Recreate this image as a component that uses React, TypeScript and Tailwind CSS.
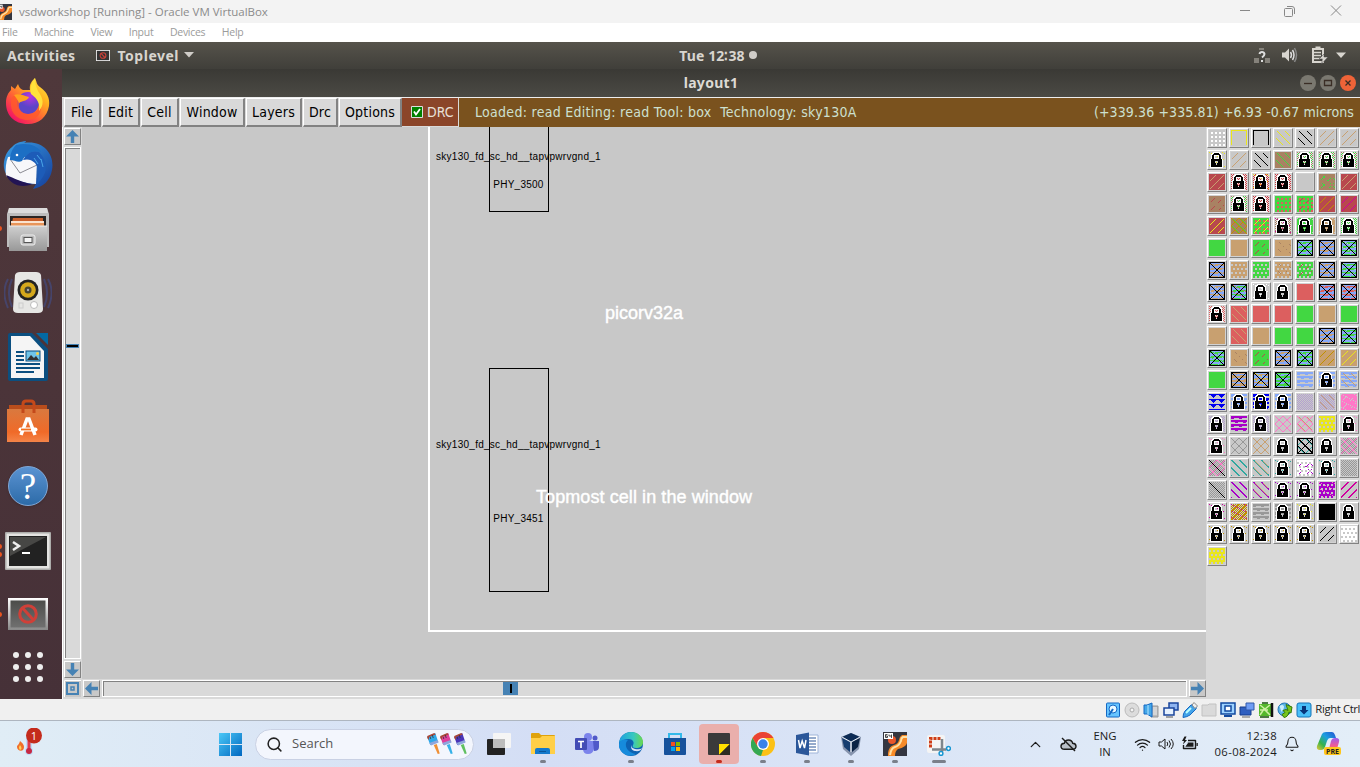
import React from "react";
import { Wifi, Bell, ChevronUp, CloudOff, Search } from "lucide-react";

/* ---------- layer palette ---------- */

const C: Record<string, string> = {
  g: "#42d742", t: "#c8a070", r: "#b8484e", b: "#a98263", l: "#dc5f5f", s: "#c8c8c8",
  u: "#86a8f8", d: "#0000f0", p: "#a800c8", k: "#ff78c8", e: "#30a8a0", v: "#b4a0d0",
  y: "#e9e61c", o: "#c09000", m: "#d000a0", w: "#ffffff", x: "#000000", h: "#989898",
  q: "#d03c44", i: "#e2e2e2",
};

type Test = (x: number, y: number) => boolean;

const PATTERNS: Record<string, Test> = {
  "/": (x, y) => (x + y) % 8 === 7 && x > 0 && y > 0 && x < 15 && y < 15,
  "\\": (x, y) => (x - y + 32) % 8 === 1 && x > 0 && y > 0 && x < 15 && y < 15,
  ">": (x, y) => (x + y) % 8 > 5,
  "<": (x, y) => (x - y + 32) % 8 < 2,
  "1": (x, y) => (x + y) % 8 === 7 && x % 6 > 1 && y % 7 > 1,
  "2": (x, y) => (x - y + 32) % 8 === 2 && x % 6 > 1 && y % 7 > 1,
  "3": (x, y) => x === y,
  "#": (x, y) => (x + y) % 8 === 7 || (x - y + 32) % 8 === 0,
  "%": (x, y) => (x + y) % 2 === 0,
  ",": (x, y) => (x + y) % 2 === 0 && (x + y * 3) % 8 < 3,
  ":": (x, y) => x % 4 > 1 && y % 4 > 1,
  ";": (x, y) => (x + (y % 8 < 4 ? 0 : 2)) % 4 < 2 && y % 4 > 1,
  "=": (x, y) => y % 4 < 2 || ((x + (y % 8 < 4 ? 0 : 4)) % 8 < 3 && y % 4 === 2),
  "-": (x, y) => (y % 4 === 2 && (x + y) % 8 < 7) || (y % 4 === 3 && (x + y) % 8 < 4),
  v: (x, y) => y % 5 === 0 || Math.abs((x % 8) - 4) < 4 - (y % 5),
  ".": (x, y) => (x * 5 + y * 3) % 13 === 0,
  n: (x, y) => y < 1 || ((x === 0 || x === 15) && y < 15),
};

const LOCK = [
  "....wwwwwww.....",
  "...wwxxxxxww....",
  "..wwxxxxxxxww...",
  "..wxxwwwwwxxw...",
  "..wxxw...wxxw...",
  "..wxxw...wxxw...",
  "..wxxwwwwwxxw...",
  ".wxxxxxxxxxxxw..",
  ".wxxxxxxxxxxxw..",
  ".wxxxx...xxxxw..",
  ".wxxxx...xxxxw..",
  ".wxxxxx.xxxxxw..",
  ".wxxxxx.xxxxxw..",
  ".wxxxxxxxxxxxw..",
  ".wxxxxxxxxxxxw..",
  ".wwwwwwwwwwwww..",
];

const pixels = (test: Test) => {
  let d = "";
  for (let y = 0; y < 16; y++) for (let x = 0; x < 16; x++) if (test(x, y)) d += `M${x} ${y}h1v1h-1z`;
  return d;
};

/* Each code is a base colour followed by pattern/colour pairs; L adds the padlock, X the contact cross. */
const LAYERS = `
s:w sny snx s\\y s\\x s/t s/t
s.yL s/t s\\x b\\g i%g,bL i%g,bL i%g,bL
r/t i%qL i%q.yL i%qL s b2g1g r/t
b1r i%g,bL i%qL g:l g:l1r r/o r/m
r/y b#o\\g g:l/y i%b.mL g.sL t.sL i%gL
g t g1r t2b u-gX u-tX u-g.sX
u-tX t;s g;s t;s2b g;s1r u.s-tX u.s-gX
u-t.sX u-g.lX s.wL sL l u-lX u-l.tX
i%lL l\\t l l g t g
t l\\t t g g u-tX u-gX
u.g-gX t2b g1r u-tX u.g-gX t/o t/y
g t-uX u-t.yX g-uX s=u s=uL s=u\\t
svd s=uL s=dL s=uL s%v s%v\\t k.s1s
s%vL s=p s%vL s#k s#k\\t y;s s.kL
s.kL s#h s#t sL s#e\\xX sL s%h#k
s%h#k3x s<e s<e\\t s.eL w1p2p;s s.eL s%h
s%h3x s<p s<p\\t s.pL s.pL p.k;s s>m
s.mL s%o#o.m s=h s=hL s.yL x sL
s.oL s.oL s.oL s.oL s.oL s/x w;s
y;s`.trim().split("\n").map((r) => r.split(" "));

function Swatch({ code }: { code: string }) {
  const lock = code.endsWith("L");
  const cross = code.endsWith("X");
  const body = lock || cross ? code.slice(1, -1) : code.slice(1);
  const pairs = body.match(/../g) ?? [];
  return (
    <div className="size-5 border border-t-white border-l-white border-r-[#828282] border-b-[#828282] bg-[#d2d2d2] p-px">
      <svg width="16" height="16" shapeRendering="crispEdges">
        <rect width="16" height="16" fill={C[code[0]]} />
        {pairs.map((p, i) => <path key={i} d={pixels(PATTERNS[p[0]])} fill={C[p[1]]} />)}
        {cross && <path d={pixels((x, y) => x === 0 || y === 0 || x === 15 || y === 15 || x === y || x + y === 15)} fill="#000" />}
        {lock && <path d={pixels((x, y) => LOCK[y][x] === "w")} fill="#fff" />}
        {lock && <path d={pixels((x, y) => LOCK[y][x] === "x")} fill="#000" />}
      </svg>
    </div>
  );
}

/* ---------- small parts ---------- */

function ArrowButton({ rotate }: { rotate: string }) {
  return (
    <div className="size-[17px] shrink-0 border border-t-white border-l-white border-r-[#828282] border-b-[#828282] bg-[#c8c8c8]">
      <svg width="15" height="15" viewBox="0 0 15 15" className={rotate} fill="#4682b4">
        <path d="M7.5 1 14 7.5H9.2V14H5.8V7.5H1z" />
      </svg>
    </div>
  );
}

function Prohibited({ small = false }: { small?: boolean }) {
  return (
    <svg width={small ? 14 : 40} height={small ? 11 : 32} viewBox="0 0 40 32" preserveAspectRatio="none">
      <defs>
        <linearGradient id="pb" x2="0" y2="1"><stop stopColor="#fff" /><stop offset="1" stopColor="#888" /></linearGradient>
        <linearGradient id="pi" x2="0" y2="1"><stop stopColor="#4c4c4a" /><stop offset="1" stopColor="#707070" /></linearGradient>
      </defs>
      <rect width="40" height="32" fill={small ? "#eee" : "url(#pb)"} />
      <rect x="2.5" y="2.5" width="35" height="27" fill={small ? "#333" : "url(#pi)"} />
      <circle cx="20" cy="16" r="8.3" fill="none" stroke="#cf4038" strokeWidth="3" />
      <path d="m14.5 10 11 12" stroke="#cf4038" strokeWidth="3" />
    </svg>
  );
}

function CellLabelBox({ top, height, phyTop, phy }: { top: string; height: string; phyTop: string; phy: string }) {
  return (
    <div className={`absolute left-[407px] ${top} ${height} w-[60px] border border-black`}>
      <div className={`absolute ${phyTop} left-0 w-[57px] text-center text-[10px] leading-3 tracking-[0.25px] text-black`}>{phy}</div>
    </div>
  );
}

/* ---------- dock icons ---------- */

const Firefox = () => (
  <svg width="48" height="48" viewBox="0 0 48 48">
    <defs>
      <linearGradient id="f1" x1="1" y1="0" x2="0.2" y2="1"><stop stopColor="#fff44f" /><stop offset=".35" stopColor="#ffb41f" /><stop offset=".65" stopColor="#ff6036" /><stop offset="1" stopColor="#f00a6c" /></linearGradient>
      <radialGradient id="f2" cx=".6" cy=".2"><stop stopColor="#b833e1" /><stop offset="1" stopColor="#5b45c8" /></radialGradient>
    </defs>
    <path d="M31 1c2 4 1 6 5 9 7 5 10 11 9 19-2 11-10 18-21 18C10 47 2 38 2 26c0-6 2-10 5-13V9l4 3 3-5c1 3 2 5 5 6h7c-1-6 2-9 5-12z" fill="url(#f1)" />
    <circle cx="24" cy="26" r="11" fill="url(#f2)" />
    <path d="M8 20c7-5 13 0 15 0-1 5-7 3-8 7-1 5 3 10 9 10 7 0 12-5 11-12 5 7 0 18-11 18C12 43 4 34 8 20z" fill="#ff5a2b" opacity=".8" />
    <path d="M10 18c5-2 10 1 15 2-1 4-8 4-10 6-1-3-3-5-5-8z" fill="#ffa21e" />
    <path d="M34 14c6 8 6 14 1 20 1-7-1-12-8-17-2-6 1-12 4-16 0 6 1 8 3 13z" fill="#ffe23c" />
  </svg>
);
const Thunderbird = () => (
  <svg width="50" height="50" viewBox="0 0 50 50">
    <defs><linearGradient id="tb" x2="1" y2="1"><stop stopColor="#3ba0e6" /><stop offset="1" stopColor="#143d9a" /></linearGradient></defs>
    <path d="M9 7C14 2 17 2 23 1c0 1-2 2-2 2 20-3 31 12 28 27-2 11-9 17-19 19l3-5C12 46-1 37 1 22 2 16 4 11 9 7z" fill="url(#tb)" />
    <path d="M5 17c9-2 18-1 29 4l-1 23c-10 0-20-4-30-8C2 29 3 22 5 17z" fill="#f7f7fa" />
    <path d="m7 19 10 14 17-8" fill="none" stroke="#8b8b93" />
    <path d="M3 35c8 3 17 8 26 9-11 5-22 0-26-9z" fill="#221454" />
    <path d="M13 5c12-3 22 1 25 7-7-2-14 0-19 9-4 2-8-1-12-1 0-4 1-10 6-15z" fill="#1c6fc4" />
    <path d="M36 12c10 11 9 22-2 32 2-8 3-14-2-21-4-4-8-4-12-3 4-7 9-10 16-8z" fill="#1d5cb8" />
    <path d="m34 15 4 5M31 18l4 6M38 19l2 8" stroke="#4aa6e8" />
    <circle cx="14" cy="15" r="1.3" fill="#fff" />
  </svg>
);
const Files = () => (
  <svg width="44" height="46" viewBox="0 0 44 46">
    <defs><linearGradient id="fg" x2="0" y2="1"><stop stopColor="#cfcfcf" /><stop offset="1" stopColor="#989898" /></linearGradient></defs>
    <path d="M3 2h38l2 6v33H1V8z" fill="#bdbdbd" /><path d="M3 2h38l1 5H2z" fill="#dcdcdc" />
    <path d="M4 10h36v11H4z" fill="#2b2523" /><path d="M7 12h30v9H5z" fill="#c9602c" /><path d="M5 15h33v2H5z" fill="#fbe3cf" /><path d="M5 17h33v3H5z" fill="#e8955a" />
    <path d="M3 20h38v25H3z" fill="url(#fg)" /><path d="M3 20h38" stroke="#eee" />
    <rect x="15" y="29" width="14" height="10" rx="2" fill="#bbb" stroke="#eee" /><rect x="18" y="31.500" width="8" height="5" fill="#f5f5f5" stroke="#555" />
  </svg>
);
const Speaker = () => (
  <svg width="48" height="44" viewBox="0 0 48 44">
    <path d="M4 8c-5 9-4 20 0 29M8 8c-4 9-4 19 0 28M44 8c5 9 4 20 0 29M40 8c4 9 4 19 0 28" fill="none" stroke="#46446a" strokeWidth="2" />
    <path d="M11 4q1-3 5-3h16q4 0 5 3l2 34q0 4-5 4H14q-5 0-5-4z" fill="#e6e6e4" />
    <circle cx="24" cy="19" r="10.500" fill="#222" /><circle cx="24" cy="19" r="7.800" fill="#d4a81c" /><circle cx="24" cy="19" r="3.500" fill="#443" /><circle cx="24" cy="19" r="1.200" fill="#aaa" />
    <circle cx="30" cy="34" r="3.500" fill="#fff" stroke="#bbb" /><rect x="15" y="32" width="4" height="5" fill="none" stroke="#ccc" />
  </svg>
);
const Writer = () => (
  <svg width="40" height="48" viewBox="0 0 40 48">
    <path d="M2 0h22l16 16v30q0 2-2 2H2q-2 0-2-2V2q0-2 2-2z" fill="#0b4f80" /><path d="M3 3h19l14 15v27H3z" fill="#f5f5f5" />
    <path d="M28 0h12v12z" fill="#0369a3" />
    <path d="M8 19h8M8 23h8M8 27h8M8 31h24M8 35h24M8 39h18" stroke="#0b4f80" strokeWidth="2" />
    <rect x="18" y="18" width="14" height="10" fill="#6fc4e8" stroke="#0b4f80" /><path d="m19 27 4-5 3 3 2-2 3 4z" fill="#333" /><circle cx="29.500" cy="20.500" r="1.500" fill="#f6d34a" />
  </svg>
);
const Software = () => (
  <svg width="42" height="44" viewBox="0 0 42 44">
    <defs><linearGradient id="sw" x2="0" y2="1"><stop stopColor="#d9793f" /><stop offset=".7" stopColor="#f06a28" /><stop offset="1" stopColor="#f48448" /></linearGradient></defs>
    <path d="M2 6h38v5H2z" fill="#b94d1c" /><path d="M0 10h42v33H0z" fill="url(#sw)" />
    <path d="M16 14V5q0-3 3-3h5q3 0 3 3v9" fill="none" stroke="#c4491a" strokeWidth="3" />
    <path d="m14 36 6-16h2l6 16" fill="none" stroke="#fff" strokeWidth="3.500" /><path d="M13.500 30.500h15" stroke="#fff" strokeWidth="4" strokeLinecap="round" /><path d="M14 30.500h10" stroke="#f37020" strokeWidth="1.800" />
  </svg>
);
const Help = () => (
  <div className="flex size-10 items-center justify-center rounded-full border border-[#7fa8d8] bg-linear-to-b from-[#5a93d2] to-[#2c6ba8] pt-px font-['Liberation_Serif',serif] text-[37px] leading-none text-white shadow">?</div>
);
const Terminal = () => (
  <svg width="46" height="38" viewBox="0 0 46 38">
    <rect width="46" height="38" rx="1" fill="#adadab" /><rect x="1.500" y="1.500" width="43" height="35" fill="#e4e4e2" /><rect x="4" y="4" width="38" height="30" fill="#222" /><path d="M5 5h36L5 24z" fill="#474745" />
    <path d="m8 10 6 4-6 4" fill="none" stroke="#eee" strokeWidth="2.500" /><path d="M17 21h8" stroke="#fff" strokeWidth="2" />
  </svg>
);

const DOCK: { icon: React.ReactNode; box: string; dots: number }[] = [
  { icon: <Firefox />, box: "h-[63px]", dots: 0 },
  { icon: <Thunderbird />, box: "h-[65px] pt-px", dots: 0 },
  { icon: <Files />, box: "h-[64px] pb-px", dots: 1 },
  { icon: <Speaker />, box: "h-[64px]", dots: 0 },
  { icon: <Writer />, box: "h-[64px]", dots: 0 },
  { icon: <Software />, box: "h-[65px] pb-px", dots: 0 },
  { icon: <Help />, box: "h-[64px]", dots: 0 },
  { icon: <Terminal />, box: "h-[66px] pb-px", dots: 2 },
  { icon: <Prohibited />, box: "h-[60px]", dots: 1 },
];

/* ---------- taskbar icons ---------- */

const S = ({ children }: { children: React.ReactNode }) => <svg width="24" height="24" viewBox="0 0 24 24">{children}</svg>;

const APPS: { icon: React.ReactNode; dot: string; bg?: string }[] = [
  { dot: "", icon: <S><rect y="7" width="18" height="16" rx="1" fill="#222" /><rect x="6" y="1" width="18" height="15" rx="1" fill="#f5f5f5" /><path d="M6 7h12v9H6z" fill="#bcbcbc" /></S> },
  { dot: "w-1.5 bg-[#7a7f8a]", icon: <S><path d="M0 2q0-1 1-1h7l2 2h13q1 0 1 1v18H0z" fill="#dfa20c" /><path d="M0 6h9l2-2h13v18H0z" fill="#ffcf48" /><path d="M4 22v-4q0-2 2-2h11q2 0 2 2v4z" fill="#1479cc" /><path d="M8 19h7v1H8z" fill="#0a559a" /></S> },
  { dot: "", icon: <S><circle cx="13" cy="5" r="4" fill="#7b83eb" /><circle cx="20" cy="6" r="2.500" fill="#5059c9" /><path d="M8 9h11v8q-1 5-6 5t-5-5z" fill="#7b83eb" /><path d="M18 9h6v6q0 4-5 4z" fill="#5059c9" /><rect y="6" width="12" height="12" rx="1" fill="#434cb5" /><path d="M3 9.500h6M6 9.500V16" stroke="#fff" strokeWidth="1.700" /></S> },
  { dot: "w-1.5 bg-[#7a7f8a]", icon: <S><defs><linearGradient id="eg" x2="1"><stop stopColor="#1d9fe0" /><stop offset=".6" stopColor="#38c8c0" /><stop offset="1" stopColor="#6bd84c" /></linearGradient></defs><circle cx="12" cy="12" r="12" fill="#0d62b2" /><path d="M0 11C1 4 6 0 12 0c7 0 12 5 12 10 0 4-3 6-7 6-3 0-4-1-3-3 2-3-1-6-4-6-5 0-8 2-10 4z" fill="url(#eg)" /><path d="M9 8c-4 3-3 12 8 14-7 4-15 0-17-7-1-6 4-9 9-7z" fill="#168bdc" /><path d="M13 13c-1 2 0 3 3 4q5 1 7-1c-1 3-4 3.500-7 3s-5-3-3-6z" fill="#d8e2f7" /></S> },
  { dot: "", icon: <S><path d="M1 6h22v16q0 1-1 1H2q-1 0-1-1z" fill="#17529c" /><path d="M6 6V2h12v4" fill="none" stroke="#33b9ea" strokeWidth="2" /><path d="M8 10h4v4H8z" fill="#f25022" /><path d="M13 10h4v4h-4z" fill="#7fba00" /><path d="M8 15h4v4H8z" fill="#00a4ef" /><path d="M13 15h4v4h-4z" fill="#ffb900" /></S> },
  { dot: "w-1.5 bg-[#c42b1c]", bg: "bg-[#eaafac]", icon: <S><rect x="1" y="1" width="22" height="22" rx="1" fill="#3a3a3a" /><path d="M12 12h11L12 23z" fill="#ffe000" /><path d="M23 12v11H12z" fill="#2c2a20" /></S> },
  { dot: "w-1.5 bg-[#7a7f8a]", icon: <S><circle cx="12" cy="12" r="12" fill="#fbc116" /><path d="M1.600 6A12 12 0 0 1 22.400 6H12z" fill="#ea4335" /><path d="m7 15 5 3-2 6A12 12 0 0 1 1.600 6z" fill="#34a853" /><path d="M1.600 6H12v6l-5 3z" fill="#ea4335" /><circle cx="12" cy="12" r="6" fill="#fff" /><circle cx="12" cy="12" r="4.700" fill="#3b82ea" /></S> },
  { dot: "w-1.5 bg-[#7a7f8a]", icon: <S><path d="M12 3h11v18H12z" fill="#fff" stroke="#9fb4d8" /><path d="M14 6h7M14 9h7M14 12h7M14 15h7M14 18h7" stroke="#2b579a" strokeWidth="1.200" /><path d="m1 3 13-2.500v23L1 21z" fill="#2b579a" /><path d="m3.500 8 1.500 8 2.200-7 2.300 7L11 8" fill="none" stroke="#fff" strokeWidth="1.500" /></S> },
  { dot: "w-1.5 bg-[#7a7f8a]", icon: <S><path d="m12 1 10 4-2 12-8 7-8-7L2 5z" fill="#8794ad" /><path d="m12 1 9 4-9 5-9-5z" fill="#0c2b55" /><path d="m3 6 8 4v10l-6-5z" fill="#173e70" /><path d="m21 6-8 4v10l6-5z" fill="#0b2344" /><path d="m3 5 9 5 9-5M12 10v10" fill="none" stroke="#e8eef5" /></S> },
  { dot: "w-1.5 bg-[#7a7f8a]", icon: <MagicIcon /> },
  { dot: "w-[14px] bg-[#7a7f8a]", icon: <S><rect y="3" width="18" height="18" rx="2" fill="#f4f4f4" /><path d="M3.500 15.500V6.500h10.500" fill="none" stroke="#cf3d16" strokeWidth="3" strokeDasharray="3 1" /><path d="M15 7v13M5 17.500h14" stroke="#7e868c" strokeWidth="2.500" /><circle cx="14" cy="21.500" r="1.900" fill="#fff" stroke="#1696d2" strokeWidth="1.500" /><circle cx="21.500" cy="16.500" r="1.900" fill="#fff" stroke="#1696d2" strokeWidth="1.500" /></S> },
];

function MagicIcon() {
  return (
    <S>
      <rect width="24" height="24" fill="#343640" />
      <path d="M24 3h-5q-3 2-3 5-1 4-5 5-5 1-6 8v3h7q0-5 3-7 8-2 9-6z" fill="#f68a28" /><path d="M24 5h-4q-2 1-2 4-2 5-6 6-4 1-5 8" fill="none" stroke="#ffe0a4" strokeWidth="2" />
      <circle cx="9" cy="8" r="4" fill="#e8572c" />
      <path d="M1 1h9v6H1z" fill="#fff" /><path d="M4.500 2.500H2.500v3h2v-1.500h-2M6 2.500V4h2.500M8.500 2.500v3.500" fill="none" stroke="#222" strokeWidth=".8" />
    </S>
  );
}

const Brush = ({ c, h }: { c: string; h: string }) => (
  <svg width="13.500" height="22" viewBox="0 0 13 22"><path d="M0 4 8 0l3 9-8 3z" fill={c} /><path d="M0 5V3l7-3 1.500 1.500L2 4 1.500 7z" fill="#a84838" /><path d="m5 2 1 3M3 4l.5 2" stroke="#333" strokeWidth=".8" /><path d="m2 10 8.500-3 .8 2.500-7.500 3z" fill="#8fa6dc" /><path d="m6.500 12 3-1 3 9.500-2 .5z" fill={h} /></svg>
);

const T = ({ children }: { children: React.ReactNode }) => <svg width="16" height="16" viewBox="0 0 16 16">{children}</svg>;
const STATUS = [
  <T><rect x="1.500" y="1" width="13" height="14" rx="1" fill="#66c4ff" stroke="#1468c4" /><circle cx="8" cy="7" r="4" fill="#e9f8ff" stroke="#1468c4" /><path d="m8 7-4 6" stroke="#1468c4" strokeWidth="2" /></T>,
  <T><circle cx="8" cy="8" r="7" fill="#dcdcdc" stroke="#bbb" /><circle cx="8" cy="8" r="2" fill="#f5f5f5" stroke="#aaa" /></T>,
  <T><path d="M9 4h6v11H8z" fill="#bbb" stroke="#999" /><path d="M10 6h4M10 8h4M10 10h4M10 12h4" stroke="#eee" /><path d="M1 3h3l5-2v14l-5-3H1z" fill="#45a8e8" stroke="#1468c4" /><path d="M5 3v10" stroke="#b7e6ff" /></T>,
  <T><path d="M6 1h9v7H6z" fill="#8fb4f0" stroke="#1b469c" strokeWidth="1.500" /><path d="M1 6h10v7H1z" fill="#e8f3ff" stroke="#1b469c" strokeWidth="1.500" /><path d="M3 15h7" stroke="#555" /></T>,
  <T><path d="M9 3q2-1 4 1t1 3l-6 6q-3 2-7 2.500 0-4 2-6.500z" fill="#43a3e8" stroke="#1468c4" /><path d="m10 3 2-2.500L15.500 4l-2.500 2.500z" fill="#eee" stroke="#888" /><path d="m4 11 5-5" stroke="#bff" strokeWidth="2" /></T>,
  <T><path d="M1 14V3h6l1-1h7v12z" fill="#dadada" stroke="#c2c2c2" /></T>,
  <T><path d="M1 1h14v11H1z" fill="#9ed3ff" stroke="#124aa0" strokeWidth="1.500" /><path d="M5 4h6v5H5z" fill="#fff" stroke="#124aa0" strokeWidth="1.500" /><path d="M4 14h8" stroke="#124aa0" strokeWidth="2" /></T>,
  <T><path d="M1 5h11v8H1z" fill="#2f5fc0" stroke="#173d8c" /><path d="M7 1h8v7H7z" fill="#6e9cf4" stroke="#3158a8" /><path d="M3 15h8" stroke="#666" /></T>,
  <T><path d="M1 2h13v12H1z" fill="#54b82b" /><path d="m2 3 5 4 5-4M2 13l4-6 6 6M2 8h8" fill="none" stroke="#cef0a4" strokeWidth="1.500" /><path d="M4 1h6M2 15h9" stroke="#18520c" strokeWidth="1.500" /><path d="M14 1v14" stroke="#111" strokeWidth="2.500" /></T>,
  <T><circle cx="7.500" cy="7.500" r="6.500" fill="#5bb5e7" stroke="#2276b3" /><path d="M2.500 4c5-3 6 2 2 6z" fill="#c8eefb" /><path d="M9 2.500 15 5l-1 6-2-1q-1 5-5 5.500l-2-3 3-2-2-2 3-1 2 1z" fill="#78c41c" stroke="#35790b" /></T>,
  <T><rect x="1" y="1" width="14" height="14" rx="2" fill="#4abff8" stroke="#1675b8" /><path d="M8 12.500 3.500 8H6V4h4v4h2.500z" fill="#083579" /></T>,
];

const MENUS: [string, string][] = [["File", "w-[37px]"], ["Edit", "w-[38px]"], ["Cell", "w-[38px]"], ["Window", "w-[65px]"], ["Layers", "w-[56px]"], ["Drc", "w-[35px]"], ["Options", "w-[63px]"]];

export default function App() {
  return (
    <div className="flex h-[767px] w-[1360px] flex-col overflow-hidden bg-white font-['Noto_Sans','Open_Sans',sans-serif]">
      {/* host window title */}
      <header className="flex h-[23px] shrink-0 items-center bg-[#f3f3f3] text-[#8b8b8b]">
        <div className="h-4 w-[13px] overflow-hidden"><div className="-ml-1 size-4 [&>svg]:size-4"><MagicIcon /></div></div>
        <span className="ml-1.5 font-['Open_Sans'] text-[11.500px] tracking-[-0.01px]">vsdworkshop [Running] - Oracle VM VirtualBox</span>
        <svg className="mr-4 ml-auto" width="110" height="14" viewBox="0 0 110 14" fill="none" stroke="#888">
          <path d="M6 5.500h10M51.500 3.500h6q1 0 1 1v6q0 1-1 1h-6q-1 0-1-1v-6q0-1 1-1zM53 1.500h5q2.500 0 2.500 2.500v5M97 .5l10 10M107 .5l-10 10" />
        </svg>
      </header>
      <nav className="flex h-[19px] shrink-0 items-center gap-[16.500px] bg-white pt-px pl-[2px] font-['Open_Sans'] text-[10.500px] tracking-[-0.27px] text-[#9b9b9b]">
        {["File", "Machine", "View", "Input", "Devices", "Help"].map((m) => <span key={m}>{m}</span>)}
      </nav>

      {/* guest top bar */}
      <div className="grid h-[27px] shrink-0 grid-cols-[1fr_auto_1fr] items-center bg-linear-to-b from-[#56534b] to-[#403f3a] pb-px text-[14px] font-bold text-[#d8d5cf]">
        <div className="flex items-center pl-[7px]">
          <span className="tracking-[0.35px]">Activities</span>
          <div className="mr-[8px] ml-[20px]"><Prohibited small /></div>
          <span className="tracking-[0.5px]">Toplevel</span>
          <svg className="ml-[5px]" width="10" height="6" fill="#d0cdc8"><path d="M0 0h10L5 5.500z" /></svg>
        </div>
        <div className="flex items-center gap-1 pl-[76px]"><span className="tracking-[0.1px]">Tue 12∶38</span><i className="size-2 rounded-full bg-[#d0cdc8]" /></div>
        <svg className="mr-3.5 ml-auto" width="94" height="20" viewBox="0 0 94 20" fill="#d8d5cf">
          <path d="M2 13h5v5H2zM13 13h5v5h-5zM7 3h5v2H7z" fill="#85827b" /><path d="M7.500 9q.5-2 2.500-2t2.500 2q0 1.500-2.500 3.500M10 15v2" fill="none" stroke="#ddd" strokeWidth="2" />
          <path d="M30 7.500h3l4-4v13l-4-4h-3z" /><path d="M38.500 7q2 3 0 6M40.500 5q3 5 0 10" fill="none" stroke="#ddd" strokeWidth="1.500" /><path d="M42.500 3q4 7 0 14" fill="none" stroke="#888" strokeWidth="1.500" />
          <path d="M61 4h10v13H61zM63.500 2.500h5" fill="none" stroke="#d8d5cf" strokeWidth="2" /><path d="M62 7.500h7M62 10.500h7M62 13.500h6" stroke="#d8d5cf" strokeWidth="1.500" /><path d="m72 9-5 5h3.500l-1 5 6.500-7h-4z" stroke="#444" strokeWidth=".5" />
          <path d="M84 7.500h10l-5 5.500z" />
        </svg>
      </div>

      <div className="flex h-[630px] shrink-0">
        {/* dock */}
        <aside className="flex w-[62px] shrink-0 flex-col bg-linear-to-b from-[#4f383b] via-[#4b3439] to-[#463138]">
          {DOCK.map((d, i) => (
            <div key={i} className={`relative flex ${d.box} w-14 items-center justify-center`}>
              {d.dots > 0 && <div className="absolute -left-[3px] flex flex-col gap-[3px]">{Array.from({ length: d.dots }, (_, k) => <i key={k} className="size-[5px] rounded-full bg-[#e95420]" />)}</div>}
              {d.icon}
            </div>
          ))}
          <div className="mt-[8px] ml-[12px] grid w-8 grid-cols-3 gap-x-[5px] gap-y-[6px]">
            {Array.from({ length: 9 }, (_, i) => <i key={i} className="size-[6px] justify-self-center rounded-full bg-[#eee]" />)}
          </div>
        </aside>

        <main className="flex w-[1298px] flex-col bg-[#d9d9d9]">
          <div className="relative flex h-7 shrink-0 items-center justify-center bg-linear-to-b from-[#3a3935] to-[#4b4a44] pb-[2px] text-[14px] font-bold text-[#dddad4]">
            <span className="tracking-[0.3px]">layout1</span>
            <div className="absolute top-1.5 right-1 flex gap-1">
              {["M4 8.500h8", "M4.500 5.500h7v5h-7z", "m5.500 5.500 5 5m0-5-5 5"].map((d, i) => (
                <svg key={i} width="16" height="16"><circle cx="8" cy="8" r="8" fill={i === 2 ? "#ee6338" : "#7a7870"} /><path d={d} fill="none" stroke="#3a2d25" strokeWidth="1.300" /></svg>
              ))}
            </div>
          </div>

          {/* menu and status line */}
          <div className="flex h-[30px] shrink-0 border-t border-[#eeeeee] font-['DejaVu_Sans_Condensed','DejaVu_Sans',sans-serif] text-[14px] text-black [font-stretch:condensed]">
            <div className="flex gap-px pl-[2px] tracking-[0.2px]">
              {MENUS.map(([m, w]) => (
                <div key={m} className={`${w} flex items-center justify-center border border-t-white border-l-white border-r-2 border-b-2 border-r-[#828282] border-b-[#828282] bg-[#d9d9d9] pt-px`}>{m}</div>
              ))}
            </div>
            <div className="flex w-[57px] shrink-0 items-center border-r border-b border-[#d9d9d9] bg-[#8b4529] pl-[9px] text-[#e8e0d8]">
              <svg className="mr-1 shrink-0" width="12" height="12"><path d="M.5.5h11v11H.5z" fill="#008000" stroke="#ddd" /><path d="m3 5.500 2 3L9 3" fill="none" stroke="#fff" strokeWidth="1.800" /></svg>
              DRC
            </div>
            <div className="flex grow items-center justify-between bg-[#7a521e] pr-[6px] pl-4 whitespace-pre text-[#cde0d0]">
              <span className="tracking-[0.29px]">Loaded: read Editing: read Tool: box  Technology: sky130A</span>
              <span className="tracking-[0.11px]">(+339.36 +335.81) +6.93 -0.67 microns</span>
            </div>
          </div>

          <div className="flex h-[572px]">
            {/* vertical scroll column */}
            <div className="flex w-5 shrink-0 flex-col items-center gap-[2px] border-l border-white pt-px">
              <ArrowButton rotate="" />
              <div className="flex h-[512px] w-[17px] flex-col border border-white bg-[#d9d9d9]">
                <div className="grow border-t border-l border-[#828282] pt-[195px]">
                  <div className="h-1 w-[13px] border border-[#4682b4] bg-black" />
                </div>
              </div>
              <ArrowButton rotate="rotate-180" />
              <svg width="17" height="17" fill="none"><path d="M0 0h17v17H0z" fill="#c8c8c8" /><path d="M.5 17V.5H17" stroke="#fff" /><path d="M3 3h11v11H3z" stroke="#4682b4" strokeWidth="2" /><path d="M7 7h3v3H7z" stroke="#4682b4" strokeWidth="1.500" /></svg>
            </div>

            <div className="flex w-[1124px] shrink-0 flex-col">
              {/* layout canvas: positions are drawing coordinates */}
              <div className="relative h-[552px] shrink-0 overflow-hidden bg-[#c8c8c8] font-['Liberation_Sans',Arial,sans-serif]">
                <div className="absolute -top-2 left-[346px] h-[513px] w-[790px] border-2 border-white" />
                <CellLabelBox top="top-[-139px]" height="h-[224px]" phyTop="top-[190px]" phy="PHY_3500" />
                <CellLabelBox top="top-[241px]" height="h-[224px]" phyTop="top-[144px]" phy="PHY_3451" />
                <div className="absolute top-[24px] left-[354px] text-[10px] leading-3 tracking-[0.27px] text-black">sky130_fd_sc_hd__tapvpwrvgnd_1</div>
                <div className="absolute top-[312px] left-[354px] text-[10px] leading-3 tracking-[0.27px] text-black">sky130_fd_sc_hd__tapvpwrvgnd_1</div>
                <div className="absolute top-[176px] left-[523px] text-[18px] leading-5 text-white [-webkit-text-stroke:0.4px_white]">picorv32a</div>
                <div className="absolute top-[360px] left-[454px] text-[18px] leading-5 tracking-[0.08px] text-white [-webkit-text-stroke:0.4px_white]">Topmost cell in the window</div>
              </div>
              <div className="flex h-5 items-center gap-[2px] pb-[2px] pl-px">
                <ArrowButton rotate="-rotate-90" />
                <div className="h-[17px] w-[1085px] shrink-0 border border-white"><div className="flex h-full items-center border-t border-l border-[#828282] pl-[399px]"><div className="flex h-[13px] w-[15px] items-center justify-center bg-[#4682b4]"><i className="h-[9px] w-[2px] bg-black" /></div></div></div>
                <ArrowButton rotate="rotate-90" />
              </div>
            </div>

            {/* layers */}
            <div className="flex grow flex-col gap-[2px] pt-px pl-px">
              {LAYERS.map((row, i) => <div key={i} className="flex gap-[2px]">{row.map((c, j) => <Swatch key={j} code={c} />)}</div>)}
            </div>
          </div>
        </main>
      </div>

      {/* host status bar */}
      <div className="flex h-[21px] shrink-0 items-center justify-end gap-[3.100px] bg-[#f0f0f0] font-['Open_Sans'] text-[11.300px] tracking-[-0.38px] text-[#222]">
        {STATUS.map((s, i) => <React.Fragment key={i}>{s}</React.Fragment>)}
        <span className="whitespace-nowrap">Right Ctrl</span>
      </div>

      {/* taskbar */}
      <footer className="flex h-[47px] shrink-0 items-center border-t border-[#aeb6c0] bg-linear-to-r from-[#e0edf6] via-[#d4def5] via-40% to-[#e3eef8] font-['Open_Sans'] text-[11.300px] text-[#1b1b1b]">
        <div className="flex w-[219px] pl-4">
          <svg width="28" height="32" viewBox="0 0 28 32"><path d="M4 13c4 3 5 6 3 9-2 2-6 0-6-3 0-2 2-2 3-6z" fill="#f1702a" /><path d="M4 17q3 4 0 5-2-2 0-5z" fill="#ffd257" /><rect x="10" y="6" width="6" height="17" rx="3" fill="#bfdcf8" /><circle cx="13" cy="23" r="4" fill="#bfdcf8" /><path d="M13 10v12" stroke="#df3a4a" strokeWidth="3" /><circle cx="13" cy="23" r="3" fill="#c72843" /><circle cx="18" cy="7.500" r="8" fill="#c42b1c" /><text x="18" y="11.500" fontSize="11" textAnchor="middle" fill="#fff">1</text></svg>
        </div>
        <svg width="23" height="23"><defs><linearGradient id="win" x2="1" y2="1"><stop stopColor="#4bc8f7" /><stop offset="1" stopColor="#0067c0" /></linearGradient></defs><path d="M0 0h11v11H0zM12 0h11v11H12zM0 12h11v11H0zM12 12h11v11H12z" fill="url(#win)" /></svg>
        <div className="ml-[13px] flex h-[31px] w-[219px] items-center rounded-full border border-[#c9d1e4] bg-[#f3f6fd] pl-[10px] text-[13px] text-[#555]">
          <Search size={17} color="#222" strokeWidth={2.200} />
          <span className="ml-[9px]">Search</span>
          <div className="mr-[6px] ml-auto flex"><Brush c="#2fa8e8" h="#f09035" /><Brush c="#e0409c" h="#36b2e8" /><Brush c="#4a35b8" h="#60c060" /></div>
        </div>
        <div className="ml-[3px] flex">
          {APPS.map((a, i) => (
            <div key={i} className="flex w-11 justify-center">
              <div className={`flex h-10 w-10 flex-col items-center rounded ${a.bg ?? ""} pt-2`}>
                {a.icon}
                {a.dot && <i className={`${a.dot} mt-1 h-[3px] rounded-full`} />}
              </div>
            </div>
          ))}
        </div>
        <div className="mr-[18px] ml-auto flex items-center">
          <ChevronUp size={17} strokeWidth={1.800} />
          <svg className="ml-4" width="17" height="15" viewBox="0 0 17 15" fill="none" stroke="#1b1b1b" strokeWidth="1.400"><path d="M4.500 12.300q-3.500 0-3.500-3 0-2.800 3.300-3Q5 3 8.500 3t4.200 3.300q3.300.2 3.300 3 0 3-3.500 3z" fill="#b9c0c9" /><path d="m2 1 13 13" /></svg>
          <div className="mx-[17px] text-center leading-4"><div>ENG</div><div>IN</div></div>
          <Wifi size={17} strokeWidth={1.800} />
          <svg className="ml-[7px]" width="17" height="16" viewBox="0 0 17 16" fill="none" stroke="#1b1b1b"><path d="M1 6h2.500L7 3v10l-3.500-3H1zM9 6q1.500 2 0 4M11 4.500q3 3.500 0 7M13 3q4.500 5 0 10" /></svg>
          <svg className="ml-[6px]" width="18" height="16" viewBox="0 0 18 16"><path d="M7 4.500h7.500v8H2.500V9" fill="none" stroke="#1b1b1b" strokeWidth="1.400" strokeLinejoin="round" /><path d="M6.500 6.500H12.500v4.300H4.300L7 7zM15.500 7h1.300v3h-1.300z" fill="#1b1b1b" /><path d="M3.500.5 1 5h2L2 8.500 6 4H4l1.500-3.500z" fill="#1b1b1b" /></svg>
          <div className="ml-[16px] text-right leading-4 tracking-[0.35px] whitespace-nowrap"><div>12:38</div><div>06-08-2024</div></div>
          <Bell className="ml-[7px]" size={16} strokeWidth={1.600} />
          <svg className="ml-[16px]" width="26" height="26" viewBox="0 0 26 26">
            <defs><linearGradient id="cp" x1="0" y1="1" x2="1" y2="0"><stop stopColor="#e8c83a" /><stop offset=".3" stopColor="#35b34a" /><stop offset=".6" stopColor="#1a9fe0" /><stop offset="1" stopColor="#2451d0" /></linearGradient><linearGradient id="cq" x2="0" y2="1"><stop stopColor="#9b5cf0" /><stop offset=".5" stopColor="#ee5a96" /><stop offset="1" stopColor="#f59a3a" /></linearGradient></defs>
            <path d="M6 3q1-2 4-2h6q2 0 3 3l1 3h-6q-2 0-3 3l-2 6q-1 3-4 3H4q-4 0-3-4z" fill="url(#cp)" /><path d="M19 7h1q4 0 3 4l-2 7q-1 4-4 4H9q3-1 4-4l2-8q1-3 4-3z" fill="url(#cq)" />
            <rect x="8" y="16" width="17" height="8" rx="2" fill="#ffc61a" /><text x="16.500" y="22.800" fontSize="7" fontWeight="700" textAnchor="middle" fill="#222">PRE</text>
          </svg>
        </div>
      </footer>
    </div>
  );
}
